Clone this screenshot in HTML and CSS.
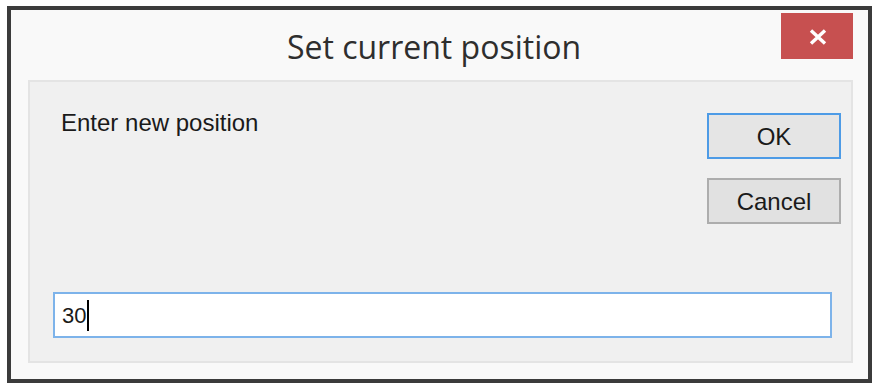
FILE: index.html
```html
<!DOCTYPE html>
<html>
<head>
<meta charset="utf-8">
<link rel="stylesheet" href="styles.css">
</head>
<body>
<div class="window">
  <div class="titlebar">
    <div class="title">Set current position</div>
    <div class="close">
      <svg width="18" height="16" viewBox="0 0 18 16"><path d="M2 1.5 L16 14.5 M16 1.5 L2 14.5" stroke="#fff" stroke-width="3.4" stroke-linecap="butt"/></svg>
    </div>
  </div>
  <div class="panel">
    <div class="toprow">
      <div class="label">Enter new position</div>
      <div class="buttons">
        <div class="btn btn-default">OK</div>
        <div class="btn">Cancel</div>
      </div>
    </div>
    <div class="field"><span class="value">30</span><span class="caret"></span></div>
  </div>
</div>
</body>
</html>
```

FILE: styles.css
```css
html, body {
  margin: 0;
  padding: 0;
  background: #ffffff;
}
body {
  width: 879px;
  height: 391px;
  overflow: hidden;
}
.window {
  box-sizing: border-box;
  margin: 6px 0 0 7px;
  width: 865px;
  height: 377px;
  border: 4px solid #3b3b3b;
  background: #f9f9f9;
  display: flex;
  flex-direction: column;
}
.titlebar {
  height: 70px;
  display: flex;
  align-items: flex-start;
  padding-left: 76px;
  flex: none;
}
.title {
  flex: 1;
  text-align: center;
  font-family: "Open Sans", "Noto Sans", sans-serif;
  font-size: 32px;
  line-height: 32px;
  padding-top: 21px;
  color: #2e2e2e;
}
.close {
  width: 72px;
  height: 46px;
  margin-top: 3px;
  margin-right: 15px;
  background: #c75050;
  display: flex;
  align-items: center;
  justify-content: center;
}
.close svg {
  display: block;
  margin-left: 2px;
  margin-top: 1px;
}
.panel {
  flex: 1;
  margin: 0 15px 16px 17px;
  background: #f0f0f0;
  border: 2px solid #e4e4e4;
  display: flex;
  flex-direction: column;
}
.toprow {
  display: flex;
  justify-content: space-between;
  align-items: flex-start;
}
.label {
  margin-left: 31px;
  margin-top: 27px;
  font-family: "Liberation Sans", Arial, sans-serif;
  font-size: 24px;
  line-height: 28px;
  color: #1a1a1a;
}
.buttons {
  margin-top: 31px;
  margin-right: 10px;
  display: flex;
  flex-direction: column;
  gap: 19px;
}
.btn {
  box-sizing: border-box;
  width: 134px;
  height: 46px;
  border: 2px solid #adadad;
  background: #e1e1e1;
  font-family: "Liberation Sans", Arial, sans-serif;
  font-size: 24px;
  color: #1a1a1a;
  display: flex;
  align-items: center;
  justify-content: center;
  padding-top: 2px;
}
.btn-default {
  border-color: #4d9be6;
  background: #e5e5e5;
}
.field {
  box-sizing: border-box;
  margin: auto 19px 23px 23px;
  height: 46px;
  border: 2px solid #7db3ea;
  background: #ffffff;
  display: flex;
  align-items: center;
  padding-left: 7px;
  font-family: "Liberation Sans", Arial, sans-serif;
  font-size: 22px;
  color: #1a1a1a;
}
.value {
  line-height: 26px;
  padding-top: 2px;
}
.caret {
  display: inline-block;
  width: 2px;
  height: 31px;
  margin-left: 1px;
  background: #000;
}
```
